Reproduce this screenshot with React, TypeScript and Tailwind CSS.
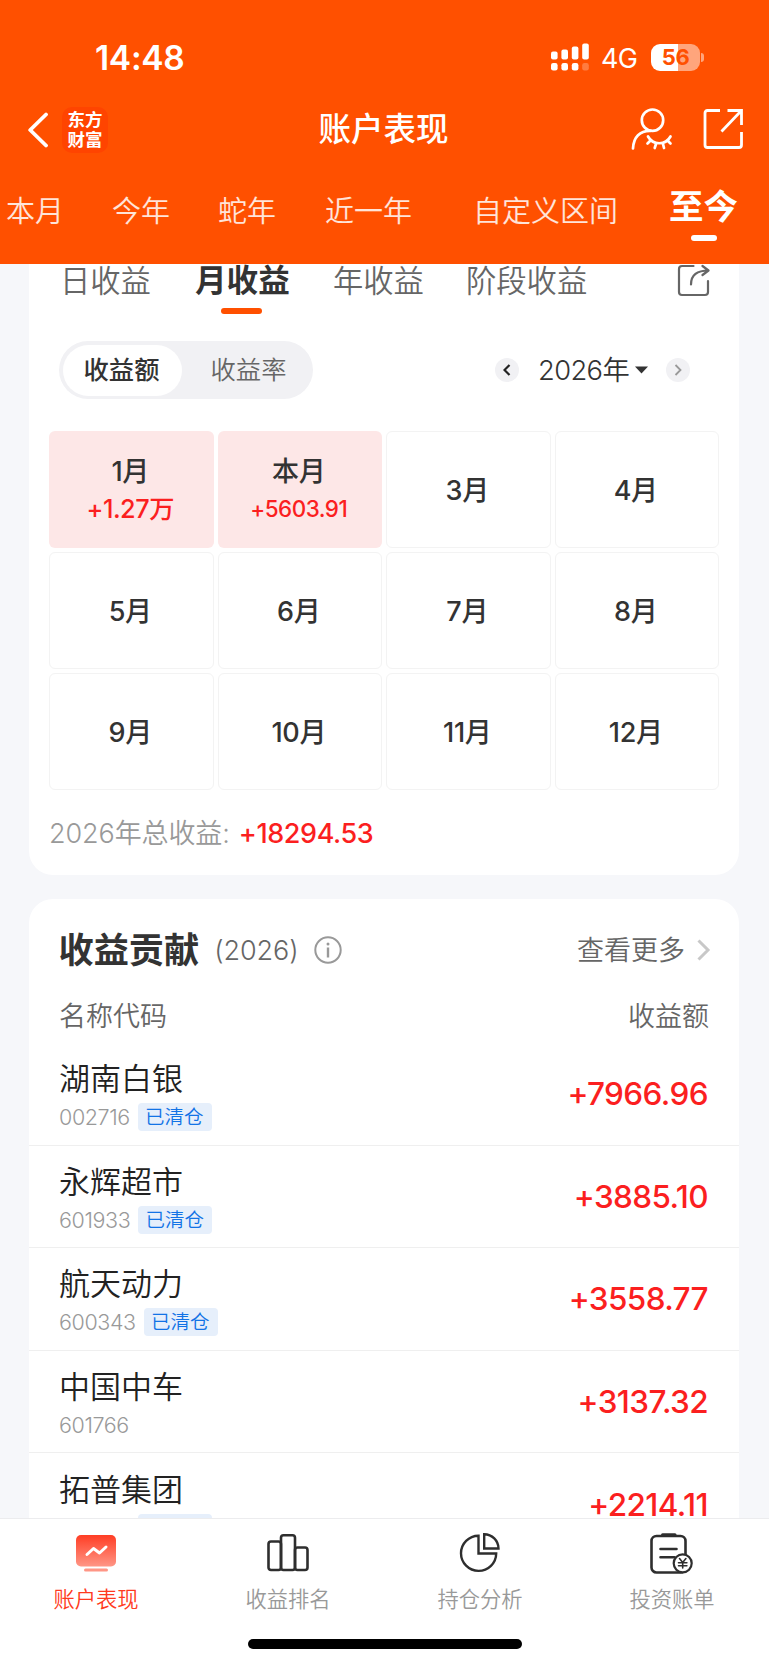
import React from "react";

type Month = { label: string; value?: string; valueClass?: string };
type Stock = { name: string; code: string; cleared?: boolean; profit: string };

const months: Month[] = [
  { label: "1月", value: "+1.27万", valueClass: "text-[25.3px] tracking-[-0.5px]" },
  { label: "本月", value: "+5603.91", valueClass: "text-[22.4px] tracking-[-0.5px]" },
  { label: "3月" },
  { label: "4月" },
  { label: "5月" },
  { label: "6月" },
  { label: "7月" },
  { label: "8月" },
  { label: "9月" },
  { label: "10月" },
  { label: "11月" },
  { label: "12月" },
];

const stocks: Stock[] = [
  { name: "湖南白银", code: "002716", cleared: true, profit: "+7966.96" },
  { name: "永辉超市", code: "601933", cleared: true, profit: "+3885.10" },
  { name: "航天动力", code: "600343", cleared: true, profit: "+3558.77" },
  { name: "中国中车", code: "601766", profit: "+3137.32" },
  { name: "拓普集团", code: "601689", cleared: true, profit: "+2214.11" },
];

function StatusBar() {
  return (
    <div className="flex h-[88px] items-end pb-[15px] pl-[95px] pr-[65px]">
      <span className="text-[33.5px] leading-[30px] font-semibold tracking-[-0.3px]">14:48</span>
      <svg className="ml-auto mb-[2px]" width="38" height="28" viewBox="0 0 38 28" fill="white">
        <rect x="0" y="8.5" width="6.6" height="8" rx="2" />
        <rect x="10.4" y="6.5" width="6.6" height="10" rx="2" />
        <rect x="20.8" y="3.5" width="6.6" height="13" rx="2" />
        <rect x="31.2" y="0.5" width="6.6" height="16" rx="2" />
        <rect x="0" y="20" width="6.6" height="7.5" rx="2.2" />
        <rect x="10.4" y="20" width="6.6" height="7.5" rx="2.2" />
        <rect x="20.8" y="20" width="6.6" height="7.5" rx="2.2" />
        <rect x="31.2" y="20" width="6.6" height="7.5" rx="2.2" opacity="0.25" />
      </svg>
      <span className="ml-[12px] w-[38px] text-[27px] leading-[28px] tracking-[-0.8px]">4G</span>
      <div className="ml-[12px] mb-[2px] flex h-[27px] w-[49px] items-center justify-center overflow-hidden rounded-[9px] bg-[linear-gradient(90deg,#fff_56%,#ffa57c_56%)] text-[22px] leading-[27px] font-bold tracking-[-0.3px] text-[#ff5000]">
        56
      </div>
      <div className="ml-[1px] mb-[11px] h-[9px] w-[3px] rounded-r-full bg-[#ffa57c]" />
    </div>
  );
}

function NavBar() {
  return (
    <div className="grid h-[82px] grid-cols-[1fr_auto_1fr] items-center pl-[27px] pr-[25px]">
      <div className="flex items-center pt-[1px]">
        <svg width="21" height="36" viewBox="0 0 21 36" fill="none" stroke="white" strokeWidth="3.8">
          <path d="M19 2.5 3.2 18 19 33.5" strokeLinecap="round" strokeLinejoin="round" />
        </svg>
        <div className="ml-[14px] flex h-[46px] w-[46px] items-center justify-center rounded-[10px] bg-[#ff4400] text-center text-[17.5px] leading-[19.5px] font-bold">
          东方
          <br />
          财富
        </div>
      </div>
      <h1 className="relative top-[1px] right-[2px] text-[32.5px] leading-[40px] font-medium">账户表现</h1>
      <div className="flex items-center justify-end">
        <svg width="42" height="42" viewBox="0 0 42 42" fill="none" stroke="white" strokeWidth="2.7" strokeLinecap="round">
          <circle cx="21.5" cy="12.2" r="10.7" />
          <path d="M2 40.5C2.5 29 9 22.5 19.5 22.8" />
          <path d="M17 28.500c5 9 17.500 9 22.500 0" />
          <path d="M19 33l-2.500 2.500M25 36l-1.300 4M32 36l1 4M37 33l2.500 2.500" />
        </svg>
        <svg className="ml-[30px]" width="41" height="42" viewBox="0 0 41 42" fill="none" stroke="white" strokeWidth="2.8">
          <path d="M17 2.5H4.5Q2 2.5 2 5V37Q2 39.5 4.5 39.5H36Q38.5 39.5 38.5 37V24" />
          <path d="M24.5 2.5H38.5V17M38 3 18.5 23.5" />
        </svg>
      </div>
    </div>
  );
}

function RangeTabs() {
  return (
    <div className="flex h-[82px] items-center pl-[6px] pt-[2px] text-[29px] leading-[40px] font-[350] text-white/85">
      <span className="w-[106px] shrink-0">本月</span>
      <span className="w-[106px] shrink-0">今年</span>
      <span className="w-[107px] shrink-0">蛇年</span>
      <span className="w-[148px] shrink-0">近一年</span>
      <span className="w-[196px] shrink-0">自定义区间</span>
      <div className="relative shrink-0 pb-[10px] text-[34.5px] font-bold text-white">
        至今
        <i className="absolute left-[22px] top-[48px] h-[6px] w-[26px] rounded-full bg-white" />
      </div>
    </div>
  );
}

function MonthCard() {
  return (
    <section className="mr-[30px] ml-[29px] h-[611px] shrink-0 rounded-b-[24px] bg-white">
      <div className="flex h-[32px] items-center pl-[31px] pt-[1px] text-[30.3px] leading-[32px] text-[#666]">
        <span className="w-[135px] font-[350]">日收益</span>
        <div className="relative w-[138px] text-[31.6px] font-bold text-[#333]">
          月收益
          <i className="absolute left-[26px] top-[43px] h-[6.5px] w-[41px] rounded-full bg-[#ff5000]" />
        </div>
        <span className="w-[133px] font-[350]">年收益</span>
        <span className="font-[350]">阶段收益</span>
        <svg className="ml-auto mr-[29px]" width="33" height="33" viewBox="0 0 33 33" fill="none" stroke="#666" strokeWidth="2.2" strokeLinejoin="round" strokeLinecap="round">
          <path d="M16.5 2H5Q2 2 2 5V28Q2 31 5 31H28Q31 31 31 28V17" />
          <path d="M14 20.5C14 11 20 6.5 31.5 6.5M25.5 2 31.5 6.5 25.5 11" />
        </svg>
      </div>

      <div className="mt-[45px] flex items-center pl-[30px]">
        <div className="flex h-[58px] w-[254px] items-center rounded-full bg-[#f1f1f4] px-[4px] text-[25.3px] leading-[36px]">
          <span className="flex h-[51px] w-[119px] items-center justify-center rounded-full bg-white pr-[2px] font-medium text-[#333]">收益额</span>
          <span className="flex-1 pl-[6px] text-center font-[350] text-[#666]">收益率</span>
        </div>
        <div className="ml-[182px] flex h-[24px] w-[24px] items-center justify-center rounded-full bg-[#f1f1f4]">
          <svg width="8" height="12" viewBox="0 0 8 12" fill="none" stroke="#222" strokeWidth="2.2">
            <path d="M6.5 1 1.5 6l5 5" />
          </svg>
        </div>
        <span className="ml-[19px] pt-[1px] text-[27.3px] leading-[36px] font-[350] tracking-[-0.6px] whitespace-nowrap text-[#333]">2026年</span>
        <svg className="ml-[6px]" width="13" height="8" viewBox="0 0 13 8" fill="#333">
          <path d="M0 .5h13L6.5 7.5z" />
        </svg>
        <div className="ml-auto mr-[49px] flex h-[24px] w-[24px] items-center justify-center rounded-full bg-[#f1f1f4]">
          <svg width="8" height="12" viewBox="0 0 8 12" fill="none" stroke="#999" strokeWidth="1.8">
            <path d="m1.5 1 5 5-5 5" />
          </svg>
        </div>
      </div>

      <div className="mx-[20px] mt-[32px] grid grid-cols-4 gap-[4px]">
        {months.map((m) => (
          <div
            key={m.label}
            className={
              m.value
                ? "flex h-[117px] flex-col items-center justify-center rounded-[6px] bg-[#fde7e7] pt-[1px] pr-[2px]"
                : "flex h-[117px] flex-col items-center justify-center rounded-[6px] border border-[#f3f3f3] pt-[2px] pr-[2px]"
            }
          >
            <span className="text-[27px] leading-[38px] font-medium tracking-[-0.3px] text-[#333]">{m.label}</span>
            {m.value && (
              <span className={"leading-[36px] font-medium text-[#fb1f1f] " + m.valueClass}>{m.value}</span>
            )}
          </div>
        ))}
      </div>

      <div className="mt-[26px] flex items-center pl-[20px] text-[27px] leading-[36px] tracking-[-0.4px]">
        <span className="font-[350] tracking-[-0.1px] text-[#999]">2026年总收益:</span>
        <span className="ml-[9px] font-medium text-[#fb1f1f]">+18294.53</span>
      </div>
    </section>
  );
}

function StockRow({ stock }: { stock: Stock }) {
  return (
    <div className="flex h-[102.6px] items-center justify-between border-b border-[#efefef] pl-[30px] pr-[31px]">
      <div className="pt-[5px]">
        <div className="text-[31px] leading-[42px] font-[350] text-[#222]">{stock.name}</div>
        <div className="flex h-[34px] items-center">
          <span className="text-[21.5px] leading-[28px] font-[350] tracking-[-0.4px] text-[#999]">{stock.code}</span>
          {stock.cleared && (
            <span className="ml-[8px] flex h-[28px] w-[74px] items-center justify-center rounded-[4px] bg-[#e6effb] pr-[1px] text-[19.5px] leading-[28px] font-[350] text-[#1273e6]">
              已清仓
            </span>
          )}
        </div>
      </div>
      <span className="pt-[1px] text-[31.5px] leading-[40px] font-medium tracking-[-0.6px] text-[#fb1f1f]">{stock.profit}</span>
    </div>
  );
}

function ContributionCard() {
  return (
    <section className="mr-[30px] ml-[29px] mt-[24px] shrink-0 rounded-t-[24px] bg-white">
      <div className="flex h-[100px] items-center pl-[29.5px] pr-[28px] pt-[2px]">
        <h2 className="text-[35.2px] leading-[48px] font-bold text-[#333]">收益贡献</h2>
        <span className="ml-[15px] pt-[1px] text-[27px] leading-[36px] font-[350] tracking-[-0.1px] text-[#666]">(2026)</span>
        <svg className="ml-[15px]" width="28" height="28" viewBox="0 0 28 28" fill="none" stroke="#999" strokeWidth="2">
          <circle cx="14" cy="14" r="12.7" />
          <path d="M14 11.5V21.5" strokeWidth="2.4" />
          <circle cx="14" cy="8" r="1.5" fill="#999" stroke="none" />
        </svg>
        <span className="ml-auto pt-[1px] text-[27px] leading-[36px] font-[350] text-[#666]">查看更多</span>
        <svg className="ml-[12px]" width="14" height="22" viewBox="0 0 14 22" fill="none" stroke="#c8c8c8" strokeWidth="3">
          <path d="m1.5 1.5 9.5 9.5-9.5 9.5" />
        </svg>
      </div>
      <div className="flex h-[44px] items-center justify-between pb-[8px] pl-[30px] pr-[30px] text-[27px] leading-[36px] font-[350] text-[#666]">
        <span>名称代码</span>
        <span>收益额</span>
      </div>
      {stocks.map((s) => (
        <StockRow key={s.code} stock={s} />
      ))}
    </section>
  );
}

function TabBar() {
  return (
    <footer className="flex h-[147px] shrink-0 flex-col items-center border-t border-[#ececee] bg-white">
      <div className="grid w-[769px] grid-cols-4 justify-items-center pr-[1px] text-[21.3px] leading-[30px] font-[350] text-[#999]">
        <div className="flex flex-col items-center text-[#ff3a20]">
          <svg className="mt-[13px] mb-[8px]" width="44" height="44" viewBox="0 0 44 44" fill="none">
            <defs>
              <linearGradient id="screen" x1="0" y1="0" x2="0" y2="1">
                <stop offset="0" stopColor="#ff3d24" />
                <stop offset="1" stopColor="#ff9686" />
              </linearGradient>
            </defs>
            <rect x="2" y="3" width="40" height="31.5" rx="5" fill="url(#screen)" />
            <rect x="10" y="36.5" width="24" height="3" rx="1.5" fill="#ff9686" />
            <path d="m13 22.5 6.5-6 6 4.5 6.5-6" stroke="white" strokeWidth="3" strokeLinecap="round" strokeLinejoin="round" />
          </svg>
          账户表现
        </div>
        <div className="flex flex-col items-center">
          <svg className="mt-[13px] mb-[8px]" width="44" height="44" viewBox="0 0 44 44" fill="none" stroke="#2e2e2e" strokeWidth="2.6">
            <rect x="2.5" y="9.5" width="12.5" height="28.5" rx="2.5" />
            <rect x="15" y="3.2" width="14" height="34.8" rx="2.5" />
            <rect x="29" y="15.5" width="12.5" height="22.5" rx="2.5" />
          </svg>
          收益排名
        </div>
        <div className="flex flex-col items-center">
          <svg className="mt-[13px] mb-[8px]" width="44" height="44" viewBox="0 0 44 44" fill="none" stroke="#2e2e2e" strokeWidth="2.4">
            <path d="M20.5 3.7A17.6 17.6 0 1 0 38.2 21.5H20.5z" />
            <path d="M26.2 2.3V16.5H40.5A14.3 14.3 0 0 0 26.2 2.3z" />
          </svg>
          持仓分析
        </div>
        <div className="flex flex-col items-center">
          <svg className="mt-[13px] mb-[8px]" width="44" height="44" viewBox="0 0 44 44" fill="none" stroke="#2e2e2e" strokeWidth="2.6" strokeLinecap="round">
            <rect x="1.5" y="4" width="34" height="36.5" rx="5" />
            <path d="M12.5 2.8h12.5" strokeWidth="3" />
            <path d="M10.5 17h16M10.5 25.3h14" />
            <circle cx="32.7" cy="31.3" r="9" fill="white" strokeWidth="2.2" />
            <path d="m29.5 26.5 3.2 4 3.2-4M32.7 30.5v5.5M28.5 30.7h8.4M28.5 33.7h8.4" strokeWidth="1.6" />
          </svg>
          投资账单
        </div>
      </div>
      <div className="mt-[25px] h-[10px] w-[274px] rounded-full bg-black" />
    </footer>
  );
}

export default function App() {
  return (
    <div className="flex h-[1665px] w-[769px] flex-col overflow-hidden bg-[#f6f7fa] font-[Inter,'Noto_Sans_CJK_SC',sans-serif]">
      <header className="h-[264px] shrink-0 bg-[#ff5000] text-white">
        <StatusBar />
        <NavBar />
        <RangeTabs />
      </header>
      <main className="flex min-h-0 flex-1 flex-col overflow-hidden">
        <MonthCard />
        <ContributionCard />
      </main>
      <TabBar />
    </div>
  );
}
